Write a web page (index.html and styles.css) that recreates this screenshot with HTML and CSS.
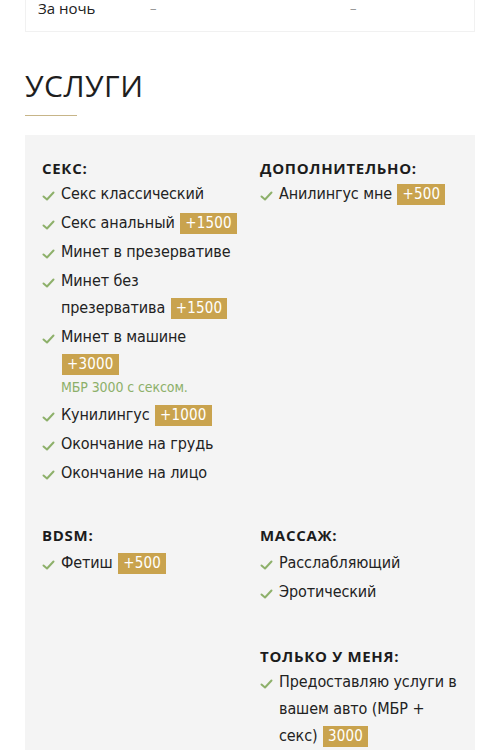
FILE: index.html
```html
<!DOCTYPE html>
<html lang="ru">
<head>
<meta charset="utf-8">
<link rel="stylesheet" href="styles.css">
</head>
<body>
<div class="page">
  <div class="price-card">
    <div class="price-row">
      <span class="price-label">За ночь</span>
      <span class="price-val">–</span>
      <span class="price-val">–</span>
    </div>
  </div>

  <h2 class="title">УСЛУГИ</h2>
  <div class="title-line"></div>

  <div class="services">
    <div class="group">
      <div class="group-title">СЕКС:</div>
      <ul class="list">
        <li><svg class="chk" viewBox="0 0 13 10"><path d="M1.5 5.5 L5 8.5 L11.5 1.5"/></svg><span>Секс классический</span></li>
        <li><svg class="chk" viewBox="0 0 13 10"><path d="M1.5 5.5 L5 8.5 L11.5 1.5"/></svg><span>Секс анальный <b class="badge">+1500</b></span></li>
        <li><svg class="chk" viewBox="0 0 13 10"><path d="M1.5 5.5 L5 8.5 L11.5 1.5"/></svg><span>Минет в презервативе</span></li>
        <li><svg class="chk" viewBox="0 0 13 10"><path d="M1.5 5.5 L5 8.5 L11.5 1.5"/></svg><span>Минет без презерватива <b class="badge">+1500</b></span></li>
        <li><svg class="chk" viewBox="0 0 13 10"><path d="M1.5 5.5 L5 8.5 L11.5 1.5"/></svg><span>Минет в машине <b class="badge">+3000</b><em class="note">МБР 3000 с сексом.</em></span></li>
        <li><svg class="chk" viewBox="0 0 13 10"><path d="M1.5 5.5 L5 8.5 L11.5 1.5"/></svg><span>Кунилингус <b class="badge">+1000</b></span></li>
        <li><svg class="chk" viewBox="0 0 13 10"><path d="M1.5 5.5 L5 8.5 L11.5 1.5"/></svg><span>Окончание на грудь</span></li>
        <li><svg class="chk" viewBox="0 0 13 10"><path d="M1.5 5.5 L5 8.5 L11.5 1.5"/></svg><span>Окончание на лицо</span></li>
      </ul>
    </div>
    <div class="group">
      <div class="group-title">ДОПОЛНИТЕЛЬНО:</div>
      <ul class="list">
        <li><svg class="chk" viewBox="0 0 13 10"><path d="M1.5 5.5 L5 8.5 L11.5 1.5"/></svg><span>Анилингус мне <b class="badge">+500</b></span></li>
      </ul>
    </div>
    <div class="group group-mid">
      <div class="group-title">BDSM:</div>
      <ul class="list">
        <li><svg class="chk" viewBox="0 0 13 10"><path d="M1.5 5.5 L5 8.5 L11.5 1.5"/></svg><span>Фетиш <b class="badge">+500</b></span></li>
      </ul>
    </div>
    <div class="group group-mid">
      <div class="group-title">МАССАЖ:</div>
      <ul class="list">
        <li><svg class="chk" viewBox="0 0 13 10"><path d="M1.5 5.5 L5 8.5 L11.5 1.5"/></svg><span>Расслабляющий</span></li>
        <li><svg class="chk" viewBox="0 0 13 10"><path d="M1.5 5.5 L5 8.5 L11.5 1.5"/></svg><span>Эротический</span></li>
      </ul>
    </div>
    <div class="group"></div>
    <div class="group">
      <div class="group-title">ТОЛЬКО У МЕНЯ:</div>
      <ul class="list">
        <li><svg class="chk" viewBox="0 0 13 10"><path d="M1.5 5.5 L5 8.5 L11.5 1.5"/></svg><span>Предоставляю услуги в вашем авто (МБР + секс) <b class="badge">3000</b></span></li>
        <li><svg class="chk" viewBox="0 0 13 10"><path d="M1.5 5.5 L5 8.5 L11.5 1.5"/></svg><span>Анал <b class="badge">1500</b></span></li>
      </ul>
    </div>
  </div>
</div>
</body>
</html>
```
FILE: styles.css
```css
html, body {
  margin: 0;
  padding: 0;
  background: #ffffff;
  overflow: hidden;
}
body {
  font-family: "DejaVu Sans Condensed", "DejaVu Sans", sans-serif;
  color: #222222;
}
.page {
  padding: 0 25px;
}
.price-card {
  margin-top: -4px;
  border: 1px solid #f1f1f1;
  border-top: none;
  padding: 0 12px 11px;
}
.price-row {
  display: grid;
  grid-template-columns: 112px 200px 1fr;
  align-items: center;
  height: 24px;
  font-family: "Open Sans", sans-serif;
  font-size: 15px;
}
.price-val {
  color: #999;
  font-size: 13px;
}
.title {
  margin: 36px 0 0;
  font-family: "Open Sans", sans-serif;
  font-weight: 400;
  font-size: 30px;
  line-height: 36px;
  letter-spacing: 0.5px;
  color: #1e1e1e;
}
.title-line {
  width: 52px;
  height: 1px;
  background: #c7b588;
  margin-top: 11px;
}
.services {
  margin-top: 19px;
  background: #f4f4f4;
  padding: 23px 15px 20px 17px;
  display: grid;
  grid-template-columns: 203px 1fr;
  column-gap: 15px;
}
.group {
  margin-bottom: 37px;
}
.group-mid {
  margin-bottom: 39px;
}
.group-mid .group-title {
  margin-bottom: 4px;
}
.group-title {
  font-family: "Open Sans", sans-serif;
  font-weight: 700;
  font-size: 15px;
  line-height: 20px;
  letter-spacing: 0.7px;
  color: #1c1c1c;
  margin-bottom: 2px;
}
.list {
  list-style: none;
  margin: 0;
  padding: 0;
}
.list li {
  display: flex;
  align-items: flex-start;
  font-size: 16px;
  line-height: 27px;
  margin-bottom: 2px;
}
.list li > span {
  letter-spacing: -0.1px;
}
.chk {
  flex: none;
  width: 13px;
  height: 10px;
  margin-top: 11px;
  margin-right: 6px;
  fill: none;
  stroke: #8db06a;
  stroke-width: 2;
  stroke-linecap: round;
  stroke-linejoin: round;
}
.badge {
  display: inline-block;
  background: #c9a34e;
  color: #ffffff;
  font-weight: 400;
  font-size: 15px;
  line-height: 21px;
  padding: 0 5px;
  margin-left: 1px;
  letter-spacing: 0.2px;
}
.note {
  display: block;
  font-style: normal;
  font-size: 14px;
  line-height: 20px;
  color: #8db06a;
  margin-bottom: 2px;
}
```
